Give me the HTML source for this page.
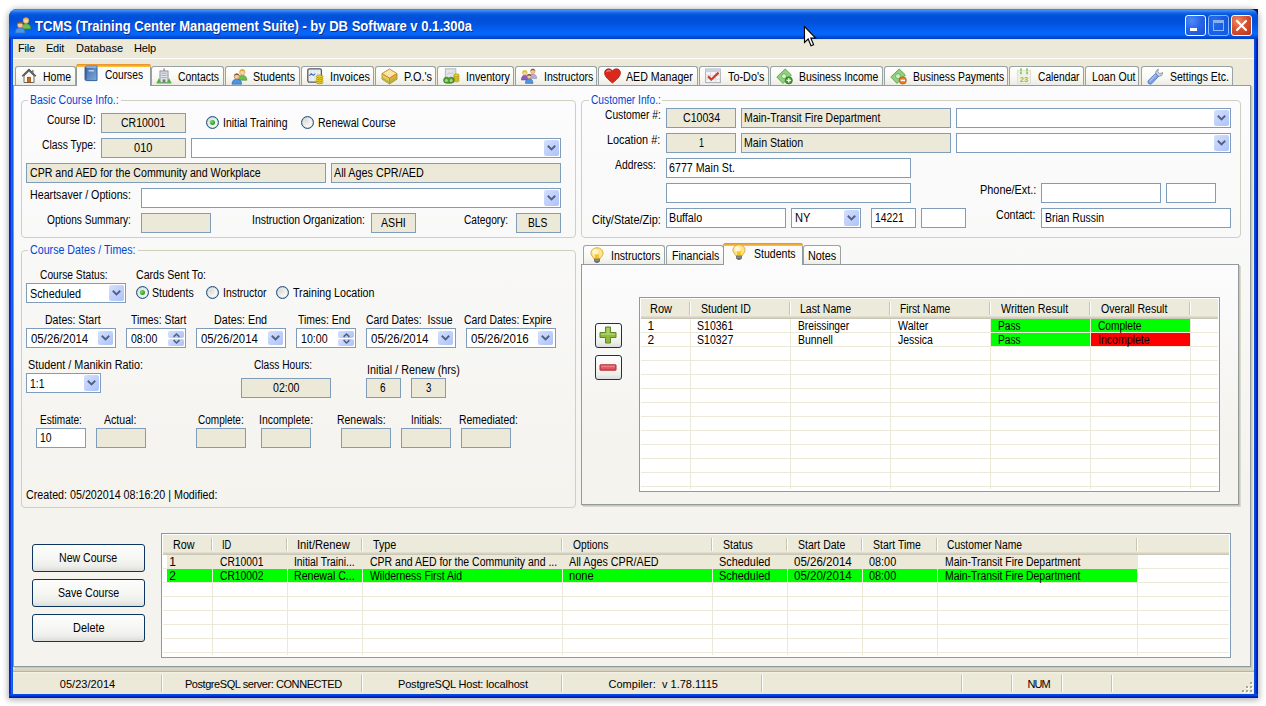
<!DOCTYPE html>
<html lang="en"><head><meta charset="utf-8"><title>TCMS (Training Center Management Suite)</title>
<style>
html,body{margin:0;padding:0;}
body{width:1266px;height:706px;overflow:hidden;background:#fff;position:relative;font-family:"Liberation Sans",sans-serif;font-size:11px;color:#000;}
div,span{position:absolute;box-sizing:border-box;}
svg{position:absolute;overflow:visible;}
.t{white-space:pre;line-height:13px;font-size:11px;}
.ms{font-family:"Liberation Sans",sans-serif;font-size:12px;transform-origin:0 0;}
.tah{font-family:"Liberation Sans",sans-serif;}
.title{font-family:"Liberation Sans",sans-serif;font-weight:bold;font-size:14px;line-height:15px;color:#fff;text-shadow:1px 1px 0 #0a2f8f;transform-origin:0 0;}
/* window */
.shadow{left:9px;top:9px;width:1249px;height:689px;border-radius:8px 8px 0 0;box-shadow:0 1px 6px 1px rgba(0,0,0,.32);}
.win{left:9px;top:9px;width:1249px;height:689px;border-radius:8px 8px 0 0;background:#0831d9;overflow:hidden;}
.tbar{left:0;top:0;width:1249px;height:30px;background:linear-gradient(180deg,#2a77ec 0,#4a94f6 1px,#3585f3 2px,#1263e4 4px,#0553dc 6px,#004fd8 9px,#0252de 14px,#045ef0 20px,#0667fb 24px,#0562f4 26px,#0352e0 27.5px,#0045cc 29px,#003cbe 30px);}
.lb{left:0;top:30px;width:4px;height:659px;background:linear-gradient(90deg,#0019cf 0,#0831d9 40%,#166aee 60%,#0855dd 100%);}
.rb{left:1245px;top:30px;width:4px;height:659px;background:linear-gradient(90deg,#0855dd 0,#0441d8 40%,#001dc0 70%,#001ea0 100%);}
.bb{left:0;top:685px;width:1249px;height:4px;background:linear-gradient(180deg,#0855dd 0,#0441d8 40%,#001dc0 70%,#001ea0 100%);}
.client{left:13px;top:39px;width:1241px;height:655px;background:#ece9d8;}
.cbtn{width:21px;height:21px;top:15px;border:1px solid #fff;border-radius:3px;}
.cmin,.cmax{background:radial-gradient(circle at 30% 25%,#4d8cf6 0,#2a66e8 45%,#1c4fd0 100%);}
.cmax{opacity:.55}
.cclose{background:radial-gradient(circle at 30% 25%,#ee8a6a 0,#d8522e 45%,#b8361a 100%);}
/* menu */
.menuline{left:13px;top:58px;width:1241px;height:1px;background:#fff;}
/* tabs */
.tab{height:19px;top:66px;border:1px solid #98a3a6;border-bottom:none;border-radius:3px 3px 0 0;background:linear-gradient(180deg,#fff 0,#f8f8f4 60%,#ecebe5 100%);}
.tabsel{height:22px;top:64px;border:1px solid #919b9c;border-bottom:none;border-radius:3px 3px 0 0;background:#fbfbf9;}
.tabsel:before{content:"";position:absolute;left:-1px;right:-1px;top:-1px;height:3px;border-radius:3px 3px 0 0;background:linear-gradient(180deg,#e68b2c 0,#ffc73c 100%);}
.page{border:1px solid #919b9c;background:linear-gradient(180deg,#fcfcfe 0,#f4f3ee 70%,#f4f3ee 100%);}
.grp{border:1px solid #d0d0bf;border-radius:4px;}
.gl{background:#f4f3ee;height:13px;}
/* fields */
.tb{border:1px solid #7f9db9;background:#fff;}
.ro{border:1px solid #7f9db9;background:#ece9d8;}
.cbb{width:15px;border-radius:2px;background:linear-gradient(135deg,#d6e0fd 0,#c3d2fc 45%,#adc2f8 100%);}
.btn{border:1px solid #0d3562;border-radius:3px;background:linear-gradient(180deg,#fdfdfc 0,#f6f6f3 50%,#eeeeea 80%,#dcdcd9 100%);}
/* listview */
.lv{border:1px solid #7f9db9;background:#fff;overflow:hidden;}
.lvh{background:#ebeadb;border-bottom:1px solid #cbc7b8;box-shadow:inset 0 -1px 0 #d6d2c2,inset 0 -2px 0 #e2decd;}
.hs{width:2px;border-left:1px solid #c7c5b2;border-right:1px solid #fff;}
.vl{width:1px;background:#ece9d8;}
.hl{height:1px;background:#ece9d8;left:0;}
/* status */
.sb{left:13px;top:669px;width:1241px;height:25px;background:linear-gradient(180deg,#d9d6c5 0,#d2cfbd 2px,#b9b6a4 2px,#b9b6a4 3px,#f3f0e4 3px,#f1eee2 4px,#ece9d8 5px,#ece9d8 100%);}
.ss{top:675px;width:2px;height:17px;border-left:1px solid #c5c2b0;border-right:1px solid #fff;}
.rad{width:13px;height:13px;border-radius:50%;border:1px solid #1c5180;box-shadow:inset 0 0 1px #1c5180;background:radial-gradient(circle at 35% 35%,#dcdcd7 0,#f4f4f1 50%,#fff 100%);}
.rad.on:after{content:"";position:absolute;left:3px;top:3px;width:5px;height:5px;border-radius:50%;background:radial-gradient(circle at 35% 35%,#6ee06a 0,#21a121 70%);}

</style></head>
<body>
<div class="shadow"></div>
<div style="left:1251px;top:9px;width:7px;height:7px;background:#06174f"></div>
<div class="win"><div class="tbar"></div><div class="lb"></div><div class="rb"></div><div class="bb"></div></div>
<div class="client"></div>
<svg style="left:14px;top:16px" width="18" height="18" viewBox="0 0 17 17"><path d="M7 12.2 Q7 7.4 11.3 7.4 Q15.8 7.4 15.8 12.2 Z" fill="#6cbf4b" stroke="#3d8a2a" stroke-width=".6"/><circle cx="11.3" cy="4.3" r="2.7" fill="#f6d2a2" stroke="#b98a3c" stroke-width=".5"/><path d="M8.6 4 Q8.8 1.3 11.3 1.3 Q13.8 1.3 14 4 Q12.6 2.8 11.3 3 Q10 2.8 8.6 4Z" fill="#e3a93a"/><path d="M1 16.2 Q1 11.2 5.8 11.2 Q10.6 11.2 10.6 16.2 Z" fill="#4e94e4" stroke="#2a62b0" stroke-width=".6"/><circle cx="5.8" cy="8.4" r="2.7" fill="#f3c9a0" stroke="#9a6a3a" stroke-width=".5"/><path d="M3.1 8 Q3.3 5.4 5.8 5.4 Q8.3 5.4 8.5 8 Q7.2 6.9 5.8 7.1 Q4.4 6.9 3.1 8Z" fill="#8b5a2b"/></svg>
<span id="t0" class="t title" style="left:35px;top:19px;transform:scaleX(0.9316);">TCMS (Training Center Management Suite) - by DB Software v 0.1.300a</span>
<div class="cbtn cmin" style="left:1185px"><div style="left:4px;top:12px;width:7px;height:3px;background:#fff"></div></div>
<div class="cbtn cmax" style="left:1208px"><div style="left:4px;top:4px;width:11px;height:11px;border:1px solid #fff;border-top-width:3px"></div></div>
<div class="cbtn cclose" style="left:1231px"><svg style="left:0;top:0" width="19" height="19" viewBox="0 0 19 19"><path d="M5 5 L14 14 M14 5 L5 14" stroke="#fff" stroke-width="2.2" stroke-linecap="round"/></svg></div>
<span id="t1" class="t tah" style="left:18px;top:42px;letter-spacing:-0.184px;">File</span>
<span id="t2" class="t tah" style="left:46px;top:42px;letter-spacing:-0.242px;">Edit</span>
<span id="t3" class="t tah" style="left:76px;top:42px;letter-spacing:-0.012px;">Database</span>
<span id="t4" class="t tah" style="left:134px;top:42px;letter-spacing:-0.156px;">Help</span>
<div class="menuline"></div>
<div style="left:13px;top:39px;width:1241px;height:1px;background:#d4dff5"></div>
<div class="tab" style="left:15px;top:66px;width:61px"></div>
<svg style="left:21px;top:68px" width="16" height="16" viewBox="0 0 16 16"><path d="M1.2 8.2 L8 1.6 L14.8 8.2" fill="none" stroke="#555" stroke-width="1.6"/><path d="M3 8 L8 3.2 L13 8 L13 14.5 L3 14.5 Z" fill="#fbfbf6" stroke="#666" stroke-width="1"/><rect x="6.4" y="9.2" width="3.2" height="5.3" fill="#c96a18" stroke="#7a3c08" stroke-width=".6"/><rect x="11" y="2.2" width="1.6" height="3" fill="#777"/></svg>
<span id="t5" class="t ms" style="left:43px;top:71px;transform:scaleX(0.8746);">Home</span>
<div class="tab" style="left:151px;top:66px;width:73px"></div>
<svg style="left:156px;top:68px" width="16" height="16" viewBox="0 0 16 16"><rect x="7.6" y="0.5" width="1" height="3" fill="#c33"/><rect x="4" y="3" width="8" height="11.5" fill="#e4e6ea" stroke="#8b929b" stroke-width="1"/><g fill="#9db7d6"><rect x="5.4" y="4.6" width="5.2" height="1.2"/><rect x="5.4" y="6.8" width="5.2" height="1.2"/><rect x="5.4" y="9" width="5.2" height="1.2"/></g><rect x="6.6" y="11.4" width="2.8" height="3.1" fill="#777"/><path d="M0.5 15 L3 10 L5 15 Z M11 15 L13 10 L15.5 15 Z" fill="#4fae3f"/><rect x="0.5" y="14.6" width="15" height="1" fill="#6fbf5a"/></svg>
<span id="t6" class="t ms" style="left:178px;top:71px;transform:scaleX(0.8657);">Contacts</span>
<div class="tab" style="left:225px;top:66px;width:75px"></div>
<svg style="left:231px;top:68px" width="17" height="17" viewBox="0 0 17 17"><path d="M7 12.2 Q7 7.4 11.3 7.4 Q15.8 7.4 15.8 12.2 Z" fill="#6cbf4b" stroke="#3d8a2a" stroke-width=".6"/><circle cx="11.3" cy="4.3" r="2.7" fill="#f6d2a2" stroke="#b98a3c" stroke-width=".5"/><path d="M8.6 4 Q8.8 1.3 11.3 1.3 Q13.8 1.3 14 4 Q12.6 2.8 11.3 3 Q10 2.8 8.6 4Z" fill="#e3a93a"/><path d="M1 16.2 Q1 11.2 5.8 11.2 Q10.6 11.2 10.6 16.2 Z" fill="#4e94e4" stroke="#2a62b0" stroke-width=".6"/><circle cx="5.8" cy="8.4" r="2.7" fill="#f3c9a0" stroke="#9a6a3a" stroke-width=".5"/><path d="M3.1 8 Q3.3 5.4 5.8 5.4 Q8.3 5.4 8.5 8 Q7.2 6.9 5.8 7.1 Q4.4 6.9 3.1 8Z" fill="#8b5a2b"/></svg>
<span id="t7" class="t ms" style="left:253px;top:71px;transform:scaleX(0.8865);">Students</span>
<div class="tab" style="left:301px;top:66px;width:73px"></div>
<svg style="left:307px;top:68px" width="17" height="17" viewBox="0 0 17 17"><rect x="0.8" y="0.8" width="13.6" height="13.4" rx="1.6" fill="#eef1f4" stroke="#5a5a5a" stroke-width="1.3"/><path d="M4 2 V13 M7.4 2 V13 M10.8 2 V13" stroke="#d4dbe3" stroke-width=".7"/><path d="M2.2 7.6 L4.4 5.8 L6.2 7.4 L8.4 5.6" fill="none" stroke="#3b6fb3" stroke-width="1.1"/><g fill="#e8d028" stroke="#8f7d10" stroke-width=".6"><ellipse cx="12.6" cy="14.4" rx="3.4" ry="1.5"/><ellipse cx="12.6" cy="12.4" rx="3.4" ry="1.5"/><ellipse cx="12.6" cy="10.4" rx="3.4" ry="1.5"/><ellipse cx="12.6" cy="8.4" rx="3.4" ry="1.5"/></g></svg>
<span id="t8" class="t ms" style="left:329.5px;top:71px;transform:scaleX(0.9084);">Invoices</span>
<div class="tab" style="left:375px;top:66px;width:61px"></div>
<svg style="left:381px;top:68px" width="17" height="17" viewBox="0 0 17 17"><path d="M8.5 1 L16 5.6 L8.5 10.2 L1 5.6 Z" fill="#fbe6a8" stroke="#c08a20" stroke-width=".9"/><path d="M1 5.6 L8.5 10.2 L8.5 16 L1 11.2 Z" fill="#f0c860" stroke="#c08a20" stroke-width=".9"/><path d="M16 5.6 L8.5 10.2 L8.5 16 L16 11.2 Z" fill="#e2ab3a" stroke="#c08a20" stroke-width=".9"/><path d="M1.4 9 L8.5 13.4 L15.6 9 L15.6 11 L8.5 15.6 L1.4 11Z" fill="#8fc04a" opacity=".85"/></svg>
<span id="t9" class="t ms" style="left:403.7px;top:71px;transform:scaleX(0.9106);">P.O.&#x27;s</span>
<div class="tab" style="left:437px;top:66px;width:77px"></div>
<svg style="left:443px;top:68px" width="17" height="16" viewBox="0 0 17 16"><rect x="2.4" y="0.8" width="10.4" height="9.6" fill="#e3e5e8" stroke="#b4b7bc" stroke-width="1"/><path d="M4 6.6 L6.4 4.6 L8.4 6 L11 3.2" fill="none" stroke="#bfc3c9" stroke-width="1"/><g fill="#e8d028" stroke="#8f7d10" stroke-width=".5"><ellipse cx="13.4" cy="12.6" rx="2.8" ry="1.4"/><ellipse cx="13.4" cy="10.8" rx="2.8" ry="1.4"/><ellipse cx="13.4" cy="9" rx="2.8" ry="1.4"/><ellipse cx="13.4" cy="7.2" rx="2.8" ry="1.4"/></g><path d="M0.6 12.2 Q0.6 9.2 3.6 9.2 Q5.2 9.2 5.9 10.2 Q6.6 9.2 8.2 9.2 Q11.2 9.2 11.2 12.2 Q11.2 15.2 8.2 15.2 L3.6 15.2 Q0.6 15.2 0.6 12.2Z" fill="#4f9e34" stroke="#2f7420" stroke-width=".7"/><circle cx="3.4" cy="12.4" r="1.5" fill="#a6d98a"/><circle cx="8.2" cy="12.4" r="1.5" fill="#a6d98a"/></svg>
<span id="t10" class="t ms" style="left:465.7px;top:71px;transform:scaleX(0.8874);">Inventory</span>
<div class="tab" style="left:515px;top:66px;width:82px"></div>
<svg style="left:521px;top:68px" width="17" height="16" viewBox="0 0 17 16"><path d="M8.4 10.6 Q8.4 6 11.8 6 Q15.6 6 15.6 10.6 Z" fill="#b7b0d2" stroke="#7d76a0" stroke-width=".5"/><circle cx="11.8" cy="3.2" r="2.3" fill="#f3c9a0" stroke="#9a6a3a" stroke-width=".4"/><path d="M9.5 3 Q9.7 .7 11.8 .7 Q13.9 .7 14.1 3 Q12.9 2 11.8 2.2 Q10.7 2 9.5 3Z" fill="#8b5a2b"/><path d="M0.4 12 Q0.4 7.2 3.8 7.2 Q7.2 7.2 7.2 12 Z" fill="#8a5fc0" stroke="#5d3a92" stroke-width=".5"/><circle cx="3.8" cy="4.8" r="2.3" fill="#f6d2a2" stroke="#b98a3c" stroke-width=".4"/><path d="M1.3 5.6 Q1 2.3 3.8 2.3 Q6.6 2.3 6.3 5.6 Q5.4 3.9 3.8 4 Q2.2 3.9 1.3 5.6Z" fill="#e6bf3e"/><path d="M4.4 15.4 Q4.4 10.8 8.2 10.8 Q12 10.8 12 15.4 Z" fill="#4e94e4" stroke="#2a62b0" stroke-width=".5"/><circle cx="8.2" cy="8.4" r="2.2" fill="#f3c9a0" stroke="#9a6a3a" stroke-width=".4"/><path d="M6 8.2 Q6.2 6 8.2 6 Q10.2 6 10.4 8.2 Q9.3 7.3 8.2 7.4 Q7.1 7.3 6 8.2Z" fill="#7a4a20"/></svg>
<span id="t11" class="t ms" style="left:543.7px;top:71px;transform:scaleX(0.8801);">Instructors</span>
<div class="tab" style="left:598px;top:66px;width:100px"></div>
<svg style="left:604px;top:68px" width="17" height="16" viewBox="0 0 17 16"><path d="M8.5 15 C2 10 0.6 7.4 0.6 4.8 C0.6 2.4 2.4 0.8 4.6 0.8 C6.2 0.8 7.6 1.6 8.5 3 C9.4 1.6 10.8 0.8 12.4 0.8 C14.6 0.8 16.4 2.4 16.4 4.8 C16.4 7.4 15 10 8.5 15 Z" fill="#d9291c" stroke="#a31208" stroke-width=".7"/><path d="M3 3.4 Q4.4 2 6.4 3" stroke="#f58a7c" stroke-width="1.2" fill="none" stroke-linecap="round"/></svg>
<span id="t12" class="t ms" style="left:626.2px;top:71px;transform:scaleX(0.8862);">AED Manager</span>
<div class="tab" style="left:699px;top:66px;width:70px"></div>
<svg style="left:705px;top:68px" width="16" height="16" viewBox="0 0 16 16"><rect x="0.6" y="1" width="14.8" height="13.6" fill="#f6f6f6" stroke="#a8b0ba" stroke-width="1"/><rect x="0.6" y="1" width="14.8" height="3" fill="#c9d3e0"/><path d="M0.6 7.4 H15.4 M0.6 11 H15.4 M5.5 4 V14.6 M10.5 4 V14.6" stroke="#cfd5dd" stroke-width=".8"/><path d="M3 8.4 L6.4 11.6 L13.6 4.6" fill="none" stroke="#d83a2a" stroke-width="2.2"/></svg>
<span id="t13" class="t ms" style="left:728px;top:71px;transform:scaleX(0.9054);">To-Do&#x27;s</span>
<div class="tab" style="left:770px;top:66px;width:113px"></div>
<svg style="left:776px;top:68px" width="18" height="17" viewBox="0 0 18 17"><path d="M0.8 9 L9.2 1 L15.4 7 L7 15.4 Z" fill="#93d080" stroke="#56a344" stroke-width=".9"/><circle cx="8" cy="8.2" r="2.5" fill="#d2efc6" stroke="#56a344" stroke-width=".7"/><circle cx="12.8" cy="12.4" r="3.6" fill="#3da12c" stroke="#1f6e14" stroke-width=".6"/><path d="M12.8 10.2 V14.6 M10.6 12.4 H15" stroke="#fff" stroke-width="1.4"/></svg>
<span id="t14" class="t ms" style="left:798.7px;top:71px;transform:scaleX(0.8677);">Business Income</span>
<div class="tab" style="left:884px;top:66px;width:124px"></div>
<svg style="left:890px;top:68px" width="18" height="17" viewBox="0 0 18 17"><path d="M0.8 9 L9.2 1 L15.4 7 L7 15.4 Z" fill="#93d080" stroke="#56a344" stroke-width=".9"/><circle cx="8" cy="8.2" r="2.5" fill="#d2efc6" stroke="#56a344" stroke-width=".7"/><circle cx="12.8" cy="12.4" r="3.6" fill="#ee7d22" stroke="#a84c08" stroke-width=".6"/><path d="M10.6 12.4 H15" stroke="#fff" stroke-width="1.5"/></svg>
<span id="t15" class="t ms" style="left:912.5px;top:71px;transform:scaleX(0.8654);">Business Payments</span>
<div class="tab" style="left:1009px;top:66px;width:75px"></div>
<svg style="left:1017px;top:68px" width="14" height="16" viewBox="0 0 14 16"><rect x="0.5" y="2.5" width="13" height="13" fill="#f1f0e6" stroke="#e0dfd0" stroke-width="1"/><rect x="3.2" y="0.2" width="1.5" height="6" fill="#79bf58"/><rect x="9.3" y="0.2" width="1.5" height="6" fill="#79bf58"/><rect x="3.2" y="2.6" width="1.5" height="1.2" fill="#cfe8c0"/><rect x="9.3" y="2.6" width="1.5" height="1.2" fill="#cfe8c0"/><text x="7" y="13.6" font-family="Liberation Sans, sans-serif" font-size="7.5" font-weight="bold" fill="#7cc25a" text-anchor="middle">23</text></svg>
<span id="t16" class="t ms" style="left:1038px;top:71px;transform:scaleX(0.8521);">Calendar</span>
<div class="tab" style="left:1085px;top:66px;width:54px"></div>
<span id="t17" class="t ms" style="left:1092px;top:71px;transform:scaleX(0.8810);">Loan Out</span>
<div class="tab" style="left:1141px;top:66px;width:92px"></div>
<svg style="left:1147px;top:68px" width="17" height="17" viewBox="0 0 17 17"><path d="M8.8 6.2 Q7.8 2.6 11.4 1 L10.8 4 L12.8 5.6 L15.8 4.6 Q15.6 8 12.4 8.4 Q11 8.6 10 7.8" fill="#cfd3d9" stroke="#8c9199" stroke-width=".8"/><path d="M8.6 5.4 L11.6 8.4 L4.8 15.6 Q3 16.8 1.4 15.4 Q0.2 13.8 1.6 12.2 Z" fill="#7ba2e6" stroke="#4a72c0" stroke-width=".8"/><path d="M3 13 L8.6 7.2" stroke="#a9c4f2" stroke-width="1.2" stroke-linecap="round"/></svg>
<span id="t18" class="t ms" style="left:1169.7px;top:71px;transform:scaleX(0.8742);">Settings Etc.</span>
<div class="page" style="left:13px;top:85px;width:1238px;height:582px;box-shadow:1px 1px 0 #c8c5b4, 2px 2px 0 #dcd9c9;"></div>
<div class="tabsel" style="left:76px;top:64px;width:75px"></div>
<svg style="left:84px;top:65px" width="14" height="17" viewBox="0 0 14 17"><defs><linearGradient id="bk" x1="0" y1="0" x2="1" y2="1"><stop offset="0" stop-color="#3e6aa8"/><stop offset="1" stop-color="#7eabdc"/></linearGradient></defs><path d="M1 2.6 Q1 1.2 2.6 1.2 L13 1.2 L13 15.6 L2.6 15.6 Q1 15.6 1 14.2 Z" fill="url(#bk)" stroke="#34609c" stroke-width="1"/><path d="M1.6 2 L12.6 2" stroke="#c9dcf2" stroke-width="1"/><rect x="1.2" y="2.6" width="1.6" height="12" fill="#2f5a96" opacity=".7"/><rect x="4.6" y="5.2" width="5.4" height="1.2" fill="#d8e6f7"/></svg>
<span id="t19" class="t ms" style="left:105px;top:69px;transform:scaleX(0.8503);">Courses</span>
<div class="grp" style="left:21px;top:100px;width:555px;height:138px;"></div>
<div class="gl" style="left:28px;top:94px;width:92.7px;background:#fcfcfd"></div>
<span id="t20" class="t ms" style="left:30px;top:94px;transform:scaleX(0.8748);color:#0046d5;">Basic Course Info.:</span>
<span id="t21" class="t ms" style="left:46.6px;top:114px;transform:scaleX(0.8508);">Course ID:</span>
<div class="ro" style="left:101px;top:113px;width:85px;height:20px;"></div>
<span id="t22" class="t ms" style="left:121.2px;top:117px;transform:scaleX(0.8737);">CR10001</span>
<div class="rad on" style="left:206px;top:116px"></div>
<span id="t23" class="t ms" style="left:222.8px;top:117px;transform:scaleX(0.8711);">Initial Training</span>
<div class="rad" style="left:301px;top:116px"></div>
<span id="t24" class="t ms" style="left:317.7px;top:117px;transform:scaleX(0.8747);">Renewal Course</span>
<span id="t25" class="t ms" style="left:41.6px;top:139px;transform:scaleX(0.8610);">Class Type:</span>
<div class="ro" style="left:101px;top:138px;width:85px;height:20px;"></div>
<span id="t26" class="t ms" style="left:134.4px;top:142px;transform:scaleX(0.9186);">010</span>
<div class="tb" style="left:191px;top:138px;width:370px;height:20px;"></div>
<div class="cbb" style="left:544px;top:140px;height:16px"><svg style="left:3px;top:5px" width="9" height="6" viewBox="0 0 9 6"><path d="M0.8 0.8 L4.5 4.4 L8.2 0.8" fill="none" stroke="#4d6185" stroke-width="1.9"/></svg></div>
<div class="ro" style="left:26px;top:163px;width:300px;height:20px;"></div>
<span id="t27" class="t ms" style="left:29.7px;top:167px;transform:scaleX(0.8850);">CPR and AED for the Community and Workplace</span>
<div class="ro" style="left:331px;top:163px;width:230px;height:20px;"></div>
<span id="t28" class="t ms" style="left:333.6px;top:167px;transform:scaleX(0.8976);">All Ages CPR/AED</span>
<span id="t29" class="t ms" style="left:29.7px;top:189px;transform:scaleX(0.8898);">Heartsaver / Options:</span>
<div class="tb" style="left:141px;top:188px;width:420px;height:20px;"></div>
<div class="cbb" style="left:544px;top:190px;height:16px"><svg style="left:3px;top:5px" width="9" height="6" viewBox="0 0 9 6"><path d="M0.8 0.8 L4.5 4.4 L8.2 0.8" fill="none" stroke="#4d6185" stroke-width="1.9"/></svg></div>
<span id="t30" class="t ms" style="left:46.7px;top:214px;transform:scaleX(0.8443);">Options Summary:</span>
<div class="ro" style="left:141px;top:213px;width:70px;height:20px;"></div>
<span id="t31" class="t ms" style="left:252px;top:214px;transform:scaleX(0.8687);">Instruction Organization:</span>
<div class="ro" style="left:371px;top:213px;width:45px;height:20px;"></div>
<span id="t32" class="t ms" style="left:380.9px;top:217px;transform:scaleX(0.8852);">ASHI</span>
<span id="t33" class="t ms" style="left:464.3px;top:214px;transform:scaleX(0.8495);">Category:</span>
<div class="ro" style="left:516px;top:213px;width:45px;height:20px;"></div>
<span id="t34" class="t ms" style="left:528.3px;top:217px;transform:scaleX(0.8551);">BLS</span>
<div class="grp" style="left:21px;top:250px;width:555px;height:258px;"></div>
<div class="gl" style="left:28px;top:244px;width:109.6px;background:#f9f8f8"></div>
<span id="t35" class="t ms" style="left:30px;top:244px;transform:scaleX(0.8895);color:#0046d5;">Course Dates / Times:</span>
<span id="t36" class="t ms" style="left:39.6px;top:269px;transform:scaleX(0.8529);">Course Status:</span>
<div class="tb" style="left:26px;top:283px;width:100px;height:20px;"></div>
<div class="cbb" style="left:109px;top:285px;height:16px"><svg style="left:3px;top:5px" width="9" height="6" viewBox="0 0 9 6"><path d="M0.8 0.8 L4.5 4.4 L8.2 0.8" fill="none" stroke="#4d6185" stroke-width="1.9"/></svg></div>
<span id="t37" class="t ms" style="left:30.2px;top:288px;transform:scaleX(0.9009);">Scheduled</span>
<span id="t38" class="t ms" style="left:136.4px;top:269px;transform:scaleX(0.8843);">Cards Sent To:</span>
<div class="rad on" style="left:136px;top:286px"></div>
<span id="t39" class="t ms" style="left:152.3px;top:287px;transform:scaleX(0.8802);">Students</span>
<div class="rad" style="left:206px;top:286px"></div>
<span id="t40" class="t ms" style="left:222.6px;top:287px;transform:scaleX(0.8677);">Instructor</span>
<div class="rad" style="left:276px;top:286px"></div>
<span id="t41" class="t ms" style="left:292.6px;top:287px;transform:scaleX(0.8884);">Training Location</span>
<span id="t42" class="t ms" style="left:45.4px;top:314px;transform:scaleX(0.8775);">Dates: Start</span>
<div class="tb" style="left:26px;top:328px;width:90px;height:20px;"></div>
<div class="cbb" style="left:98px;top:331px;height:14px"><svg style="left:3px;top:4px" width="9" height="6" viewBox="0 0 9 6"><path d="M0.8 0.8 L4.5 4.4 L8.2 0.8" fill="none" stroke="#4d6185" stroke-width="1.9"/></svg></div>
<span id="t43" class="t ms" style="left:30.7px;top:333px;transform:scaleX(0.9523);">05/26/2014</span>
<span id="t44" class="t ms" style="left:130.8px;top:314px;transform:scaleX(0.8625);">Times: Start</span>
<div class="tb" style="left:126px;top:328px;width:60px;height:20px;"></div>
<div class="cbb" style="left:168px;top:331px;height:7px;width:16px"><svg style="left:4.5px;top:1.5px" width="7" height="4" viewBox="0 0 7 4"><path d="M0.6 3.8 L3.5 1 L6.4 3.8" fill="none" stroke="#4d6185" stroke-width="1.6"/></svg></div>
<div class="cbb" style="left:168px;top:338.5px;height:7px;width:16px"><svg style="left:4.5px;top:1.5px" width="7" height="4" viewBox="0 0 7 4"><path d="M0.6 0.2 L3.5 3 L6.4 0.2" fill="none" stroke="#4d6185" stroke-width="1.6"/></svg></div>
<span id="t45" class="t ms" style="left:130.8px;top:333px;transform:scaleX(0.8758);">08:00</span>
<span id="t46" class="t ms" style="left:214.2px;top:314px;transform:scaleX(0.8943);">Dates: End</span>
<div class="tb" style="left:196px;top:328px;width:90px;height:20px;"></div>
<div class="cbb" style="left:268px;top:331px;height:14px"><svg style="left:3px;top:4px" width="9" height="6" viewBox="0 0 9 6"><path d="M0.8 0.8 L4.5 4.4 L8.2 0.8" fill="none" stroke="#4d6185" stroke-width="1.9"/></svg></div>
<span id="t47" class="t ms" style="left:200.9px;top:333px;transform:scaleX(0.9457);">05/26/2014</span>
<span id="t48" class="t ms" style="left:297.7px;top:314px;transform:scaleX(0.8680);">Times: End</span>
<div class="tb" style="left:296px;top:328px;width:60px;height:20px;"></div>
<div class="cbb" style="left:338px;top:331px;height:7px;width:16px"><svg style="left:4.5px;top:1.5px" width="7" height="4" viewBox="0 0 7 4"><path d="M0.6 3.8 L3.5 1 L6.4 3.8" fill="none" stroke="#4d6185" stroke-width="1.6"/></svg></div>
<div class="cbb" style="left:338px;top:338.5px;height:7px;width:16px"><svg style="left:4.5px;top:1.5px" width="7" height="4" viewBox="0 0 7 4"><path d="M0.6 0.2 L3.5 3 L6.4 0.2" fill="none" stroke="#4d6185" stroke-width="1.6"/></svg></div>
<span id="t49" class="t ms" style="left:300.7px;top:333px;transform:scaleX(0.8857);">10:00</span>
<span id="t50" class="t ms" style="left:365.7px;top:314px;transform:scaleX(0.8704);">Card Dates:  Issue</span>
<div class="tb" style="left:366px;top:328px;width:90px;height:20px;"></div>
<div class="cbb" style="left:438px;top:331px;height:14px"><svg style="left:3px;top:4px" width="9" height="6" viewBox="0 0 9 6"><path d="M0.8 0.8 L4.5 4.4 L8.2 0.8" fill="none" stroke="#4d6185" stroke-width="1.9"/></svg></div>
<span id="t51" class="t ms" style="left:370.8px;top:333px;transform:scaleX(0.9557);">05/26/2014</span>
<span id="t52" class="t ms" style="left:464.3px;top:314px;transform:scaleX(0.8651);">Card Dates: Expire</span>
<div class="tb" style="left:466px;top:328px;width:90px;height:20px;"></div>
<div class="cbb" style="left:538px;top:331px;height:14px"><svg style="left:3px;top:4px" width="9" height="6" viewBox="0 0 9 6"><path d="M0.8 0.8 L4.5 4.4 L8.2 0.8" fill="none" stroke="#4d6185" stroke-width="1.9"/></svg></div>
<span id="t53" class="t ms" style="left:470.6px;top:333px;transform:scaleX(0.9607);">05/26/2016</span>
<span id="t54" class="t ms" style="left:28.2px;top:359px;transform:scaleX(0.9026);">Student / Manikin Ratio:</span>
<div class="tb" style="left:26px;top:373px;width:75px;height:20px;"></div>
<div class="cbb" style="left:84px;top:375px;height:16px"><svg style="left:3px;top:5px" width="9" height="6" viewBox="0 0 9 6"><path d="M0.8 0.8 L4.5 4.4 L8.2 0.8" fill="none" stroke="#4d6185" stroke-width="1.9"/></svg></div>
<span id="t55" class="t ms" style="left:30.2px;top:378px;transform:scaleX(0.8629);">1:1</span>
<span id="t56" class="t ms" style="left:254.4px;top:359px;transform:scaleX(0.8473);">Class Hours:</span>
<div class="ro" style="left:241px;top:378px;width:90px;height:20px;"></div>
<span id="t57" class="t ms" style="left:272.9px;top:382px;transform:scaleX(0.8824);">02:00</span>
<span id="t58" class="t ms" style="left:367px;top:364px;transform:scaleX(0.8977);">Initial / Renew (hrs)</span>
<div class="ro" style="left:366px;top:378px;width:35px;height:20px;"></div>
<span id="t59" class="t ms" style="left:380.4px;top:382px;transform:scaleX(0.8374);">6</span>
<div class="ro" style="left:411px;top:378px;width:35px;height:20px;"></div>
<span id="t60" class="t ms" style="left:425.6px;top:382px;transform:scaleX(0.8075);">3</span>
<span id="t61" class="t ms" style="left:39.6px;top:414px;transform:scaleX(0.8377);">Estimate:</span>
<div class="tb" style="left:36px;top:428px;width:50px;height:20px;"></div>
<span id="t62" class="t ms" style="left:39.6px;top:432px;transform:scaleX(0.8683);">10</span>
<span id="t63" class="t ms" style="left:104px;top:414px;transform:scaleX(0.8831);">Actual:</span>
<div class="ro" style="left:96px;top:428px;width:50px;height:20px;"></div>
<span id="t64" class="t ms" style="left:197.6px;top:414px;transform:scaleX(0.8354);">Complete:</span>
<div class="ro" style="left:196px;top:428px;width:50px;height:20px;"></div>
<span id="t65" class="t ms" style="left:258.5px;top:414px;transform:scaleX(0.8719);">Incomplete:</span>
<div class="ro" style="left:261px;top:428px;width:50px;height:20px;"></div>
<span id="t66" class="t ms" style="left:336.7px;top:414px;transform:scaleX(0.8692);">Renewals:</span>
<div class="ro" style="left:341px;top:428px;width:50px;height:20px;"></div>
<span id="t67" class="t ms" style="left:410.5px;top:414px;transform:scaleX(0.8325);">Initials:</span>
<div class="ro" style="left:401px;top:428px;width:50px;height:20px;"></div>
<span id="t68" class="t ms" style="left:458.5px;top:414px;transform:scaleX(0.8656);">Remediated:</span>
<div class="ro" style="left:461px;top:428px;width:50px;height:20px;"></div>
<span id="t69" class="t ms" style="left:26.4px;top:488.6px;transform:scaleX(0.8919);">Created: 05/202014 08:16:20 | Modified:</span>
<div class="grp" style="left:581px;top:100px;width:660px;height:138px;"></div>
<div class="gl" style="left:588.6px;top:94px;width:73.8px;background:#fcfcfd"></div>
<span id="t70" class="t ms" style="left:590.6px;top:94px;transform:scaleX(0.8509);color:#0046d5;">Customer Info.:</span>
<span id="t71" class="t ms" style="left:604.5px;top:109px;transform:scaleX(0.8553);">Customer #:</span>
<div class="ro" style="left:666px;top:108px;width:70px;height:20px;"></div>
<span id="t72" class="t ms" style="left:682.5px;top:112px;transform:scaleX(0.8823);">C10034</span>
<div class="ro" style="left:741px;top:108px;width:210px;height:20px;"></div>
<span id="t73" class="t ms" style="left:744.4px;top:112px;transform:scaleX(0.8722);">Main-Transit Fire Department</span>
<div class="tb" style="left:956px;top:108px;width:275px;height:20px;"></div>
<div class="cbb" style="left:1214px;top:110px;height:16px"><svg style="left:3px;top:5px" width="9" height="6" viewBox="0 0 9 6"><path d="M0.8 0.8 L4.5 4.4 L8.2 0.8" fill="none" stroke="#4d6185" stroke-width="1.9"/></svg></div>
<span id="t74" class="t ms" style="left:607.2px;top:134px;transform:scaleX(0.9060);">Location #:</span>
<div class="ro" style="left:666px;top:133px;width:70px;height:20px;"></div>
<span id="t75" class="t ms" style="left:699.2px;top:137px;transform:scaleX(0.7500);">1</span>
<div class="ro" style="left:741px;top:133px;width:210px;height:20px;"></div>
<span id="t76" class="t ms" style="left:744.4px;top:137px;transform:scaleX(0.8860);">Main Station</span>
<div class="tb" style="left:956px;top:133px;width:275px;height:20px;"></div>
<div class="cbb" style="left:1214px;top:135px;height:16px"><svg style="left:3px;top:5px" width="9" height="6" viewBox="0 0 9 6"><path d="M0.8 0.8 L4.5 4.4 L8.2 0.8" fill="none" stroke="#4d6185" stroke-width="1.9"/></svg></div>
<span id="t77" class="t ms" style="left:614.7px;top:159px;transform:scaleX(0.8636);">Address:</span>
<div class="tb" style="left:666px;top:158px;width:245px;height:20px;"></div>
<span id="t78" class="t ms" style="left:669.1px;top:162px;transform:scaleX(0.8900);">6777 Main St.</span>
<div class="tb" style="left:666px;top:183px;width:245px;height:20px;"></div>
<span id="t79" class="t ms" style="left:979.5px;top:184px;transform:scaleX(0.9090);">Phone/Ext.:</span>
<div class="tb" style="left:1041px;top:183px;width:120px;height:20px;"></div>
<div class="tb" style="left:1166px;top:183px;width:50px;height:20px;"></div>
<span id="t80" class="t ms" style="left:591.6px;top:214px;transform:scaleX(0.9130);">City/State/Zip:</span>
<div class="tb" style="left:666px;top:208px;width:120px;height:20px;"></div>
<span id="t81" class="t ms" style="left:669.1px;top:212px;transform:scaleX(0.8908);">Buffalo</span>
<div class="tb" style="left:791px;top:208px;width:70px;height:20px;"></div>
<div class="cbb" style="left:844px;top:210px;height:16px"><svg style="left:3px;top:5px" width="9" height="6" viewBox="0 0 9 6"><path d="M0.8 0.8 L4.5 4.4 L8.2 0.8" fill="none" stroke="#4d6185" stroke-width="1.9"/></svg></div>
<span id="t82" class="t ms" style="left:795.4px;top:212px;transform:scaleX(0.9237);">NY</span>
<div class="tb" style="left:871px;top:208px;width:45px;height:20px;"></div>
<span id="t83" class="t ms" style="left:874.7px;top:212px;transform:scaleX(0.8629);">14221</span>
<div class="tb" style="left:921px;top:208px;width:45px;height:20px;"></div>
<span id="t84" class="t ms" style="left:996.4px;top:208.5px;transform:scaleX(0.8836);">Contact:</span>
<div class="tb" style="left:1041px;top:208px;width:190px;height:20px;"></div>
<span id="t85" class="t ms" style="left:1044.6px;top:212px;transform:scaleX(0.8687);">Brian Russin</span>
<div class="tab" style="left:583px;top:245px;width:82px;height:20px"></div>
<svg style="left:589.5px;top:247px" width="14" height="16" viewBox="0 0 14 16"><path d="M7 0.8 C3.4 0.8 1 3.2 1 6.2 C1 8.4 2.6 9.6 3.6 11 L4.2 12 L9.8 12 L10.4 11 C11.4 9.6 13 8.4 13 6.2 C13 3.2 10.6 0.8 7 0.8 Z" fill="#fde58e" stroke="#e0a22a" stroke-width=".9"/><ellipse cx="5.4" cy="4.8" rx="3" ry="2.6" fill="#fff8d8" opacity=".9"/><rect x="5" y="7.4" width="4" height="4.4" fill="#f6c524"/><rect x="4.3" y="12" width="5.4" height="2.6" fill="#8d8d8d" stroke="#5c5c5c" stroke-width=".6"/><rect x="5.4" y="14.6" width="3.2" height="1.1" fill="#444"/></svg>
<span id="t86" class="t ms" style="left:611.3px;top:250px;transform:scaleX(0.8783);">Instructors</span>
<div class="tab" style="left:666px;top:245px;width:57.5px;height:20px"></div>
<span id="t87" class="t ms" style="left:672.3px;top:250px;transform:scaleX(0.8754);">Financials</span>
<div class="tab" style="left:803px;top:245px;width:38px;height:20px"></div>
<span id="t88" class="t ms" style="left:807.5px;top:250px;transform:scaleX(0.9024);">Notes</span>
<div class="page" style="left:581px;top:264px;width:658px;height:241px;box-shadow:1px 1px 0 #c8c5b4, 2px 2px 0 #dcd9c9;"></div>
<div class="tabsel" style="left:723px;top:243px;width:80px;height:22px"></div>
<svg style="left:731.7px;top:244px" width="14" height="16" viewBox="0 0 14 16"><path d="M7 0.8 C3.4 0.8 1 3.2 1 6.2 C1 8.4 2.6 9.6 3.6 11 L4.2 12 L9.8 12 L10.4 11 C11.4 9.6 13 8.4 13 6.2 C13 3.2 10.6 0.8 7 0.8 Z" fill="#fde58e" stroke="#e0a22a" stroke-width=".9"/><ellipse cx="5.4" cy="4.8" rx="3" ry="2.6" fill="#fff8d8" opacity=".9"/><rect x="5" y="7.4" width="4" height="4.4" fill="#f6c524"/><rect x="4.3" y="12" width="5.4" height="2.6" fill="#8d8d8d" stroke="#5c5c5c" stroke-width=".6"/><rect x="5.4" y="14.6" width="3.2" height="1.1" fill="#444"/></svg>
<span id="t89" class="t ms" style="left:753.8px;top:248px;transform:scaleX(0.8781);">Students</span>
<div class="btn" style="left:595px;top:323px;width:27px;height:25px;"><svg style="left:3px;top:2px" width="18" height="18" viewBox="0 0 18 18"><path d="M6.5 1 H11.5 V6.5 H17 V11.5 H11.5 V17 H6.5 V11.5 H1 V6.5 H6.5 Z" fill="#8fba3e" stroke="#5f8a22" stroke-width="1"/><path d="M7.5 2 H10.5 V7.5 H16 V9 H2 V7.5 H7.5 Z" fill="#b2d670" opacity=".8"/></svg></div>
<div class="btn" style="left:595px;top:355px;width:27px;height:25px;"><svg style="left:3px;top:8px" width="18" height="8" viewBox="0 0 18 8"><rect x="1" y="0.8" width="16" height="5.4" rx=".4" fill="#e2555c" stroke="#ae2a32" stroke-width="1"/><rect x="2" y="1.6" width="14" height="1.6" fill="#f08a8e" opacity=".8"/></svg></div>
<div class="lv" style="left:639px;top:297px;width:581px;height:195px;"><div class="lvh" style="left:1px;top:1px;width:577px;height:20px"></div><div style="left:351px;top:21px;width:99px;height:13px;background:#00ff00"></div><div style="left:451px;top:21px;width:99px;height:13px;background:#00ff00"></div><div style="left:351px;top:35px;width:99px;height:13px;background:#00ff00"></div><div style="left:451px;top:35px;width:99px;height:13px;background:#ff0000"></div><div class="hl" style="left:1px;top:34px;width:577px"></div><div class="hl" style="left:1px;top:48px;width:577px"></div><div class="hl" style="left:1px;top:62px;width:577px"></div><div class="hl" style="left:1px;top:76px;width:577px"></div><div class="hl" style="left:1px;top:90px;width:577px"></div><div class="hl" style="left:1px;top:104px;width:577px"></div><div class="hl" style="left:1px;top:118px;width:577px"></div><div class="hl" style="left:1px;top:132px;width:577px"></div><div class="hl" style="left:1px;top:146px;width:577px"></div><div class="hl" style="left:1px;top:160px;width:577px"></div><div class="hl" style="left:1px;top:174px;width:577px"></div><div class="hl" style="left:1px;top:188px;width:577px"></div><div class="hs" style="left:49px;top:4px;height:13px"></div><div class="vl" style="left:50px;top:21px;height:170px"></div><div class="hs" style="left:149px;top:4px;height:13px"></div><div class="vl" style="left:150px;top:21px;height:170px"></div><div class="hs" style="left:249px;top:4px;height:13px"></div><div class="vl" style="left:250px;top:21px;height:170px"></div><div class="hs" style="left:349px;top:4px;height:13px"></div><div class="vl" style="left:350px;top:21px;height:170px"></div><div class="hs" style="left:449px;top:4px;height:13px"></div><div class="vl" style="left:450px;top:21px;height:170px"></div><div class="hs" style="left:549px;top:4px;height:13px"></div><div class="vl" style="left:550px;top:21px;height:170px"></div></div>
<span id="t90" class="t ms" style="left:650.3px;top:303px;transform:scaleX(0.9161);">Row</span>
<span id="t91" class="t ms" style="left:700.5px;top:303px;transform:scaleX(0.8783);">Student ID</span>
<span id="t92" class="t ms" style="left:800.3px;top:303px;transform:scaleX(0.8788);">Last Name</span>
<span id="t93" class="t ms" style="left:900.3px;top:303px;transform:scaleX(0.8556);">First Name</span>
<span id="t94" class="t ms" style="left:1000.5px;top:303px;transform:scaleX(0.8943);">Written Result</span>
<span id="t95" class="t ms" style="left:1100.5px;top:303px;transform:scaleX(0.8811);">Overall Result</span>
<span id="t96" class="t ms" style="left:647.6px;top:320px;">1</span>
<span id="t97" class="t ms" style="left:697.3px;top:320px;transform:scaleX(0.8773);">S10361</span>
<span id="t98" class="t ms" style="left:797.6px;top:320px;transform:scaleX(0.8512);">Breissinger</span>
<span id="t99" class="t ms" style="left:897.6px;top:320px;transform:scaleX(0.8880);">Walter</span>
<span id="t100" class="t ms" style="left:997.8px;top:320px;transform:scaleX(0.8468);">Pass</span>
<span id="t101" class="t ms" style="left:1097.8px;top:320px;transform:scaleX(0.8470);">Complete</span>
<span id="t102" class="t ms" style="left:647.6px;top:334px;">2</span>
<span id="t103" class="t ms" style="left:697.3px;top:334px;transform:scaleX(0.8773);">S10327</span>
<span id="t104" class="t ms" style="left:797.6px;top:334px;transform:scaleX(0.8718);">Bunnell</span>
<span id="t105" class="t ms" style="left:897.6px;top:334px;transform:scaleX(0.8722);">Jessica</span>
<span id="t106" class="t ms" style="left:997.8px;top:334px;transform:scaleX(0.8468);">Pass</span>
<span id="t107" class="t ms" style="left:1097.8px;top:334px;transform:scaleX(0.8790);">Incomplete</span>
<div class="btn" style="left:32px;top:544px;width:113px;height:28px;"></div>
<span id="t108" class="t ms" style="left:59.1px;top:551.5px;transform:scaleX(0.8799);">New Course</span>
<div class="btn" style="left:32px;top:579px;width:113px;height:28px;"></div>
<span id="t109" class="t ms" style="left:58.4px;top:586.5px;transform:scaleX(0.8807);">Save Course</span>
<div class="btn" style="left:32px;top:614px;width:113px;height:28px;"></div>
<span id="t110" class="t ms" style="left:73px;top:621.5px;transform:scaleX(0.9110);">Delete</span>
<div class="lv" style="left:161px;top:533px;width:1070px;height:125px;"><div class="lvh" style="left:1px;top:1px;width:1066px;height:20px"></div><div style="left:5px;top:21px;width:970px;height:13px;background:#ece9d8"></div><div style="left:5px;top:35px;width:970px;height:13px;background:#00ff00"></div><div class="hl" style="left:1px;top:34px;width:1066px"></div><div class="hl" style="left:1px;top:48px;width:1066px"></div><div class="hl" style="left:1px;top:62px;width:1066px"></div><div class="hl" style="left:1px;top:76px;width:1066px"></div><div class="hl" style="left:1px;top:90px;width:1066px"></div><div class="hl" style="left:1px;top:104px;width:1066px"></div><div class="hl" style="left:1px;top:118px;width:1066px"></div><div class="hs" style="left:49px;top:4px;height:13px"></div><div class="vl" style="left:50px;top:21px;height:100px"></div><div class="hs" style="left:124px;top:4px;height:13px"></div><div class="vl" style="left:125px;top:21px;height:100px"></div><div class="hs" style="left:199px;top:4px;height:13px"></div><div class="vl" style="left:200px;top:21px;height:100px"></div><div class="hs" style="left:399px;top:4px;height:13px"></div><div class="vl" style="left:400px;top:21px;height:100px"></div><div class="hs" style="left:549px;top:4px;height:13px"></div><div class="vl" style="left:550px;top:21px;height:100px"></div><div class="hs" style="left:624px;top:4px;height:13px"></div><div class="vl" style="left:625px;top:21px;height:100px"></div><div class="hs" style="left:699px;top:4px;height:13px"></div><div class="vl" style="left:700px;top:21px;height:100px"></div><div class="hs" style="left:774px;top:4px;height:13px"></div><div class="vl" style="left:775px;top:21px;height:100px"></div><div class="hs" style="left:974px;top:4px;height:13px"></div><div class="vl" style="left:975px;top:21px;height:100px"></div></div>
<span id="t111" class="t ms" style="left:172.6px;top:539px;transform:scaleX(0.8953);">Row</span>
<span id="t112" class="t ms" style="left:222.3px;top:539px;transform:scaleX(0.7750);">ID</span>
<span id="t113" class="t ms" style="left:297.3px;top:539px;transform:scaleX(0.9294);">Init/Renew</span>
<span id="t114" class="t ms" style="left:372.6px;top:539px;transform:scaleX(0.8956);">Type</span>
<span id="t115" class="t ms" style="left:572.6px;top:539px;transform:scaleX(0.8559);">Options</span>
<span id="t116" class="t ms" style="left:722.6px;top:539px;transform:scaleX(0.8786);">Status</span>
<span id="t117" class="t ms" style="left:797.6px;top:539px;transform:scaleX(0.8773);">Start Date</span>
<span id="t118" class="t ms" style="left:872.5px;top:539px;transform:scaleX(0.8741);">Start Time</span>
<span id="t119" class="t ms" style="left:947.2px;top:539px;transform:scaleX(0.8585);">Customer Name</span>
<span id="t120" class="t ms" style="left:169.3px;top:556px;">1</span>
<span id="t121" class="t ms" style="left:219.7px;top:556px;transform:scaleX(0.8579);">CR10001</span>
<span id="t122" class="t ms" style="left:294.3px;top:556px;transform:scaleX(0.8585);">Initial Traini...</span>
<span id="t123" class="t ms" style="left:369.5px;top:556px;transform:scaleX(0.8743);">CPR and AED for the Community and ...</span>
<span id="t124" class="t ms" style="left:568.6px;top:556px;transform:scaleX(0.8956);">All Ages CPR/AED</span>
<span id="t125" class="t ms" style="left:719.3px;top:556px;transform:scaleX(0.9062);">Scheduled</span>
<span id="t126" class="t ms" style="left:794.3px;top:556px;transform:scaleX(0.9607);">05/26/2014</span>
<span id="t127" class="t ms" style="left:869.2px;top:556px;transform:scaleX(0.9057);">08:00</span>
<span id="t128" class="t ms" style="left:944.5px;top:556px;transform:scaleX(0.8665);">Main-Transit Fire Department</span>
<span id="t129" class="t ms" style="left:169.3px;top:570px;">2</span>
<span id="t130" class="t ms" style="left:219.7px;top:570px;transform:scaleX(0.8579);">CR10002</span>
<span id="t131" class="t ms" style="left:294.3px;top:570px;transform:scaleX(0.8835);">Renewal C...</span>
<span id="t132" class="t ms" style="left:369.5px;top:570px;transform:scaleX(0.8677);">Wilderness First Aid</span>
<span id="t133" class="t ms" style="left:568.6px;top:570px;transform:scaleX(0.9212);">none</span>
<span id="t134" class="t ms" style="left:719.3px;top:570px;transform:scaleX(0.9062);">Scheduled</span>
<span id="t135" class="t ms" style="left:794.3px;top:570px;transform:scaleX(0.9607);">05/20/2014</span>
<span id="t136" class="t ms" style="left:869.2px;top:570px;transform:scaleX(0.9057);">08:00</span>
<span id="t137" class="t ms" style="left:944.5px;top:570px;transform:scaleX(0.8665);">Main-Transit Fire Department</span>
<div class="sb"></div>
<div class="ss" style="left:161px"></div>
<div class="ss" style="left:361px"></div>
<div class="ss" style="left:561px"></div>
<div class="ss" style="left:761px"></div>
<div class="ss" style="left:961px"></div>
<div class="ss" style="left:1011px"></div>
<div class="ss" style="left:1061px"></div>
<div class="ss" style="left:1111px"></div>
<span id="t138" class="t tah" style="left:59.8px;top:677.6px;letter-spacing:0.034px;">05/23/2014</span>
<span id="t139" class="t tah" style="left:184.9px;top:677.6px;letter-spacing:-0.429px;">PostgreSQL server: CONNECTED</span>
<span id="t140" class="t tah" style="left:398px;top:677.6px;letter-spacing:-0.189px;">PostgreSQL Host: localhost</span>
<span id="t141" class="t tah" style="left:608.5px;top:677.6px;letter-spacing:0.021px;">Compiler:  v 1.78.1115</span>
<span id="t142" class="t tah" style="left:1027.5px;top:677.6px;letter-spacing:-0.954px;">NUM</span>
<svg style="left:1241px;top:681px" width="13" height="13" viewBox="0 0 13 13"><g fill="#fff"><rect x="10" y="2" width="2" height="2"/><rect x="6" y="6" width="2" height="2"/><rect x="10" y="6" width="2" height="2"/><rect x="2" y="10" width="2" height="2"/><rect x="6" y="10" width="2" height="2"/><rect x="10" y="10" width="2" height="2"/></g><g fill="#a8a593"><rect x="9" y="1" width="2" height="2"/><rect x="5" y="5" width="2" height="2"/><rect x="9" y="5" width="2" height="2"/><rect x="1" y="9" width="2" height="2"/><rect x="5" y="9" width="2" height="2"/><rect x="9" y="9" width="2" height="2"/></g></svg>
<svg style="left:803px;top:25px" width="14" height="23" viewBox="0 0 14 23"><path d="M1.5 1.5 L1.5 17.5 L5.2 14 L8 20.8 L10.6 19.7 L7.8 13 L12.6 13 Z" fill="#fff" stroke="#000" stroke-width="1.1" stroke-linejoin="miter"/></svg>
</body></html>
